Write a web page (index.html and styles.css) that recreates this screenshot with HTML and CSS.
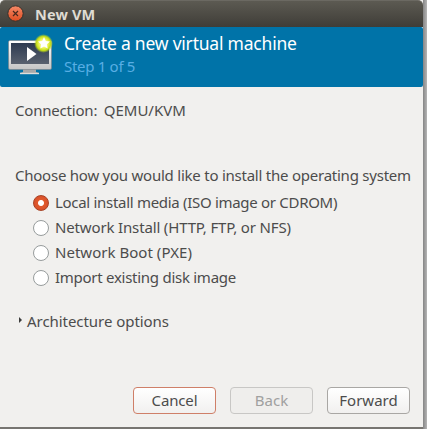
FILE: index.html
```html
<!DOCTYPE html>
<html lang="en">
<head>
<meta charset="utf-8">
<title>New VM</title>
<link rel="stylesheet" href="styles.css">
</head>
<body>
<div class="window">
  <div class="titlebar">
    <svg class="close" width="17" height="17" viewBox="0 0 17 17">
      <defs><linearGradient id="orange" x1="0" y1="0" x2="0" y2="1"><stop offset="0" stop-color="#f58a68"/><stop offset="1" stop-color="#df4c20"/></linearGradient></defs>
      <circle cx="8.5" cy="8.5" r="7.7" fill="url(#orange)" stroke="#33312c" stroke-width="1"/>
      <path d="M6 6l5 5M11 6l-5 5" stroke="#49291d" stroke-width="1.2"/>
    </svg>
    <span class="title">New VM</span>
  </div>
  <header class="banner">
    <svg class="vm-icon" width="48" height="44" viewBox="0 0 48 44">
      <defs>
        <linearGradient id="screen" x1="0" y1="0" x2="0" y2="1"><stop offset="0" stop-color="#2d3a50"/><stop offset="1" stop-color="#59616f"/></linearGradient>
        <linearGradient id="frame" x1="0" y1="0" x2="0" y2="1"><stop offset="0" stop-color="#fff"/><stop offset="1" stop-color="#c5c5c5"/></linearGradient>
        <radialGradient id="glow"><stop offset="0" stop-color="#fffff0"/><stop offset=".45" stop-color="#f0f660"/><stop offset=".75" stop-color="#c4dc18"/><stop offset="1" stop-color="#aacb20" stop-opacity="0"/></radialGradient>
      </defs>
      <path d="M23 35h13v3l3 1v1H20v-1l3-1z" fill="#a9a9a9"/>
      <path d="M20 39.500h19" stroke="#e0dddb" stroke-width="1.4"/>
      <rect x="8.5" y="6.500" width="43" height="29" rx="1.5" fill="url(#frame)" stroke="#777f87" stroke-width=".6"/>
      <rect x="11" y="9" width="38" height="21" fill="url(#screen)"/>
      <path d="M27 13v14l9.500-7z" fill="#fff"/>
      <circle cx="43.500" cy="9.500" r="9.500" fill="url(#glow)"/>
      <path d="M44 3l1.800 3.900 4.200.5-3.100 2.900.8 4.200-3.700-2-3.700 2 .8-4.200L38 7.400l4.200-.5z" fill="#fff"/>
    </svg>
    <div class="heading">
      <h1>Create a new virtual machine</h1>
      <p>Step 1 of 5</p>
    </div>
  </header>
  <main class="content">
    <p class="connection"><span class="label">Connection:</span><span class="value">QEMU/KVM</span></p>
    <p class="prompt"><span>Choose how you would like to install the operating system</span></p>
    <div class="choices">
      <label class="choice"><i class="radio checked"></i><span class="c1">Local install media (ISO image or CDROM)</span></label>
      <label class="choice"><i class="radio"></i><span class="c2">Network Install (HTTP, FTP, or NFS)</span></label>
      <label class="choice"><i class="radio"></i><span class="c3">Network Boot (PXE)</span></label>
      <label class="choice"><i class="radio"></i><span class="c4">Import existing disk image</span></label>
    </div>
    <div class="expander"><i class="arrow"></i><span>Architecture options</span></div>
    <div class="actions">
      <button class="cancel">Cancel</button>
      <button class="back" disabled>Back</button>
      <button class="forward">Forward</button>
    </div>
  </main>
</div>
</body>
</html>
```
FILE: styles.css
```css
* { box-sizing: border-box; }
body {
  margin: 0;
  width: 427px;
  height: 429px;
  overflow: hidden;
  background: linear-gradient(90deg, #858585, #b5b5b5) right / 4px 100% no-repeat, #777571;
  font: 15px/20px "Noto Sans", sans-serif;
  color: #4c4c4c;
}
h1, p { margin: 0; font-weight: 400; }
span, h1, p, button { white-space: nowrap; }
.window {
  width: 423px;
  height: 427px;
  background: #f1f0ee;
  display: flex;
  flex-direction: column;
}
.titlebar {
  height: 27px;
  flex: none;
  display: flex;
  align-items: center;
  padding-left: 7px;
  background: linear-gradient(#5c5a52, #3f3d38);
  border-top: 1px solid #6b6962;
  border-radius: 5px 5px 0 0;
}
.close { margin-top: -1px; }
.title {
  margin: -1px 0 0 11px;
  font-size: 14.5px;
  font-weight: 700;
  letter-spacing: 0.15px;
  color: #dfdbd2;
}
.banner {
  height: 60px;
  flex: none;
  display: flex;
  background: #0073a8;
  border-radius: 2px;
}
.vm-icon { margin: 7px 8px 0 0; flex: none; overflow: visible; }
.heading { padding: 4px 0 0 8px; }
.heading h1 { font-size: 17.5px; line-height: 24px; letter-spacing: -0.21px; color: #fff; }
.heading p { line-height: 22px; letter-spacing: -0.3px; color: #58aee4; }
.content { flex: 1; display: flex; flex-direction: column; padding: 13px 13px 13px 15px; }
.connection { display: flex; gap: 6.5px; }
.label { letter-spacing: -0.2px; }
.prompt { margin-top: 45px; letter-spacing: -0.235px; }
.choices { margin-top: 5px; padding-left: 18px; }
.choice { display: flex; align-items: center; height: 25px; gap: 6px; }
.choice span { margin-top: -2px; }
.c1 { letter-spacing: -0.3px; }
.c2 { letter-spacing: -0.15px; }
.c3 { letter-spacing: 0.03px; }
.c4 { letter-spacing: -0.27px; }
.radio {
  width: 16px;
  height: 16px;
  border: 1px solid #979c9c;
  border-radius: 50%;
  background: #fff;
}
.radio.checked {
  border-color: #a84325;
  background: radial-gradient(circle, #fff 2.500px, #e05a2c 3.500px, #d9502a 7px);
}
.expander { display: flex; align-items: center; margin-top: 21px; padding-left: 4px; gap: 5px; letter-spacing: -0.05px; }
.arrow {
  margin-top: -2px;
  border: solid transparent;
  border-width: 3px 0 3px 3px;
  border-left-color: #3c3c3c;
}
.actions { display: flex; justify-content: flex-end; gap: 14px; margin-top: auto; }
button {
  width: 83px;
  height: 27px;
  padding: 0 0 2px;
  border: 1px solid #a9a7a4;
  border-radius: 4px;
  background: linear-gradient(#fff, #f1f0ef);
  font: inherit;
  color: #4c4c4c;
}
.cancel { border-color: #cf7f68; letter-spacing: -0.15px; }
.back { color: #a0a09f; background: #efeeec; border-color: #c8c7c5; }
```
